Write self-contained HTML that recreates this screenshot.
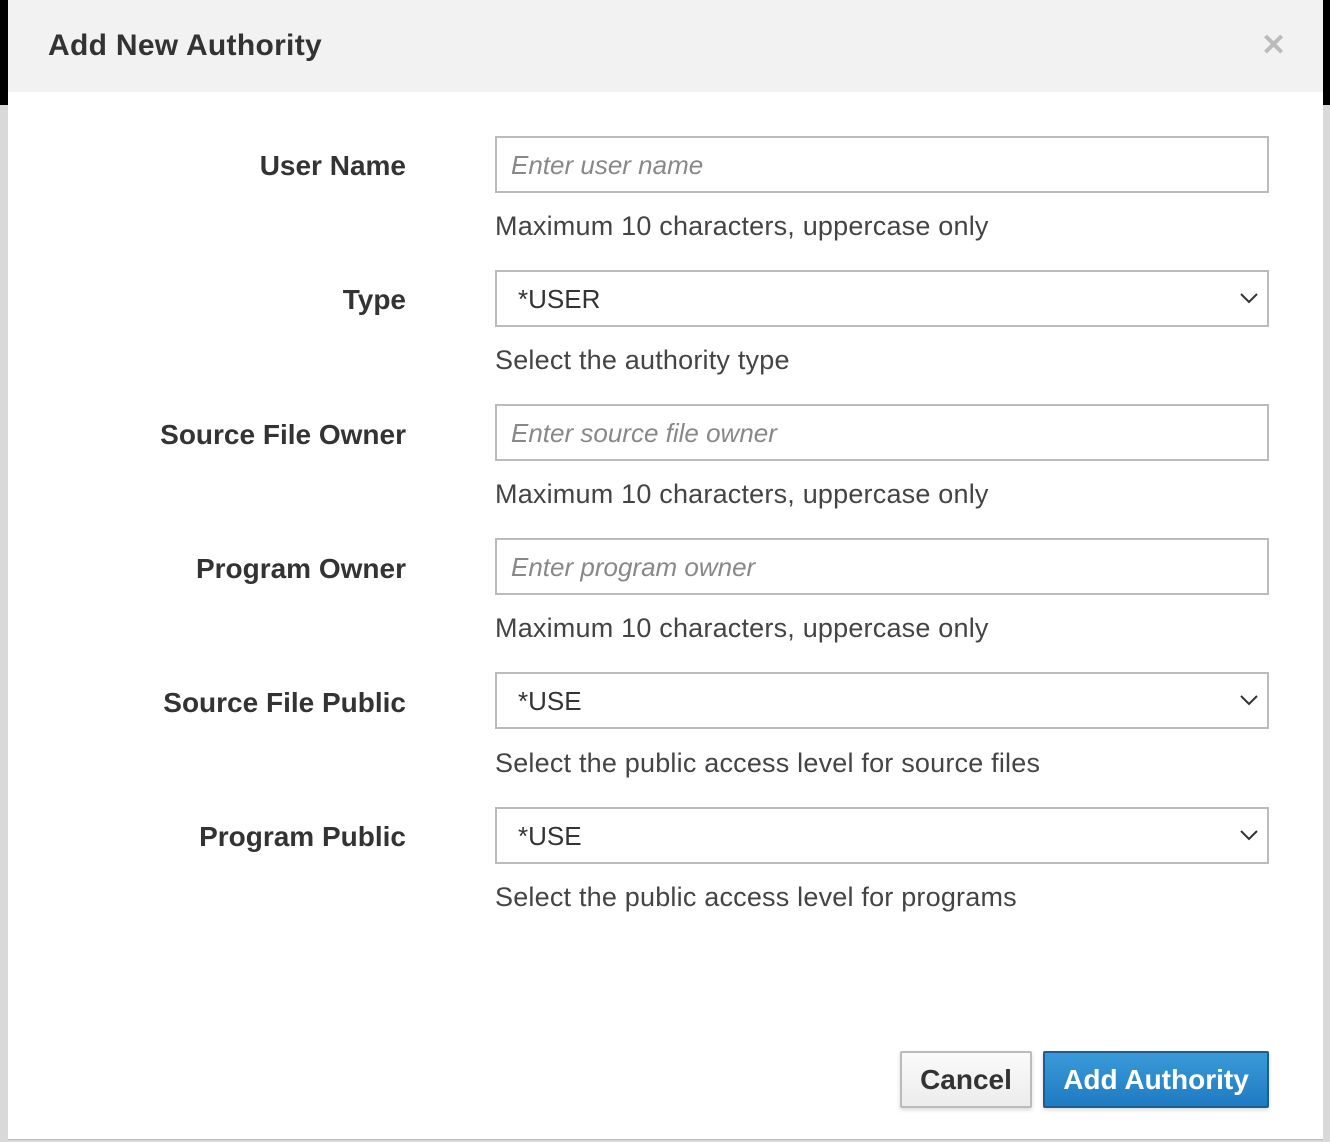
<!DOCTYPE html>
<html><head><meta charset="utf-8"><style>
*{box-sizing:border-box;margin:0;padding:0}
body{width:1330px;height:1142px;position:relative;background:#d9d9d9;font-family:"Liberation Sans",sans-serif;overflow:hidden}
.bl{position:absolute;left:0;top:0;width:8px;height:105px;background:#000}
.br{position:absolute;right:0;top:0;width:8px;height:105px;background:#000}
.dlg{position:absolute;left:8px;top:0;width:1315px;height:1140px;background:#fff;border-bottom:1px solid #bbb}
.hd{position:absolute;left:0;top:0;width:100%;height:92px;background:#f2f2f2}
.hd h1{position:absolute;left:40px;top:29px;font-size:30px;font-weight:bold;color:#333;letter-spacing:0.3px}
.x{position:absolute;left:1253px;top:28px;font-size:30px;font-weight:bold;color:#bbb}
.lab{position:absolute;right:917px;font-size:28px;font-weight:bold;color:#333;white-space:nowrap}
.in{position:absolute;left:487px;width:774px;height:57px;border:2px solid #bbb;font-size:26px;padding:12px 0 0 14px;color:#888;font-style:italic}
.sel{font-style:normal;color:#333;padding-left:21px}
.sel svg{position:absolute;right:8px;top:20px}
.help{position:absolute;left:487px;font-size:27px;color:#444;white-space:nowrap;letter-spacing:0.2px}
.btn{position:absolute;top:1051px;height:57px;font-size:28px;border-radius:2px;text-align:center;padding-top:11px;font-weight:bold}
.c{left:892px;width:132px;border:2px solid #bbb;background:linear-gradient(#fafafa,#ececec);color:#333;box-shadow:0 2px 4px rgba(0,0,0,.15)}
.a{left:1035px;width:226px;border:2px solid #1a5e94;background:linear-gradient(#3a9ad8,#1f7bc2);color:#fff;box-shadow:0 2px 4px rgba(0,0,0,.15)}
</style></head><body>
<div class="bl"></div><div class="br"></div>
<div class="dlg">
<div class="hd"><h1>Add New Authority</h1><div class="x">✕</div></div>
<div class="lab" style="top:150px">User Name</div>
<div class="in" style="top:136px">Enter user name</div>
<div class="help" style="top:211px">Maximum 10 characters, uppercase only</div>
<div class="lab" style="top:284px">Type</div>
<div class="in sel" style="top:270px">*USER<svg width="20" height="12"><path d="M2 2l8 8 8-8" fill="none" stroke="#333" stroke-width="2"/></svg></div>
<div class="help" style="top:345px">Select the authority type</div>
<div class="lab" style="top:419px">Source File Owner</div>
<div class="in" style="top:404px">Enter source file owner</div>
<div class="help" style="top:479px">Maximum 10 characters, uppercase only</div>
<div class="lab" style="top:553px">Program Owner</div>
<div class="in" style="top:538px">Enter program owner</div>
<div class="help" style="top:613px">Maximum 10 characters, uppercase only</div>
<div class="lab" style="top:687px">Source File Public</div>
<div class="in sel" style="top:672px">*USE<svg width="20" height="12"><path d="M2 2l8 8 8-8" fill="none" stroke="#333" stroke-width="2"/></svg></div>
<div class="help" style="top:748px">Select the public access level for source files</div>
<div class="lab" style="top:821px">Program Public</div>
<div class="in sel" style="top:807px">*USE<svg width="20" height="12"><path d="M2 2l8 8 8-8" fill="none" stroke="#333" stroke-width="2"/></svg></div>
<div class="help" style="top:882px">Select the public access level for programs</div>
<div class="btn c">Cancel</div>
<div class="btn a">Add Authority</div>
</div>
</body></html>
